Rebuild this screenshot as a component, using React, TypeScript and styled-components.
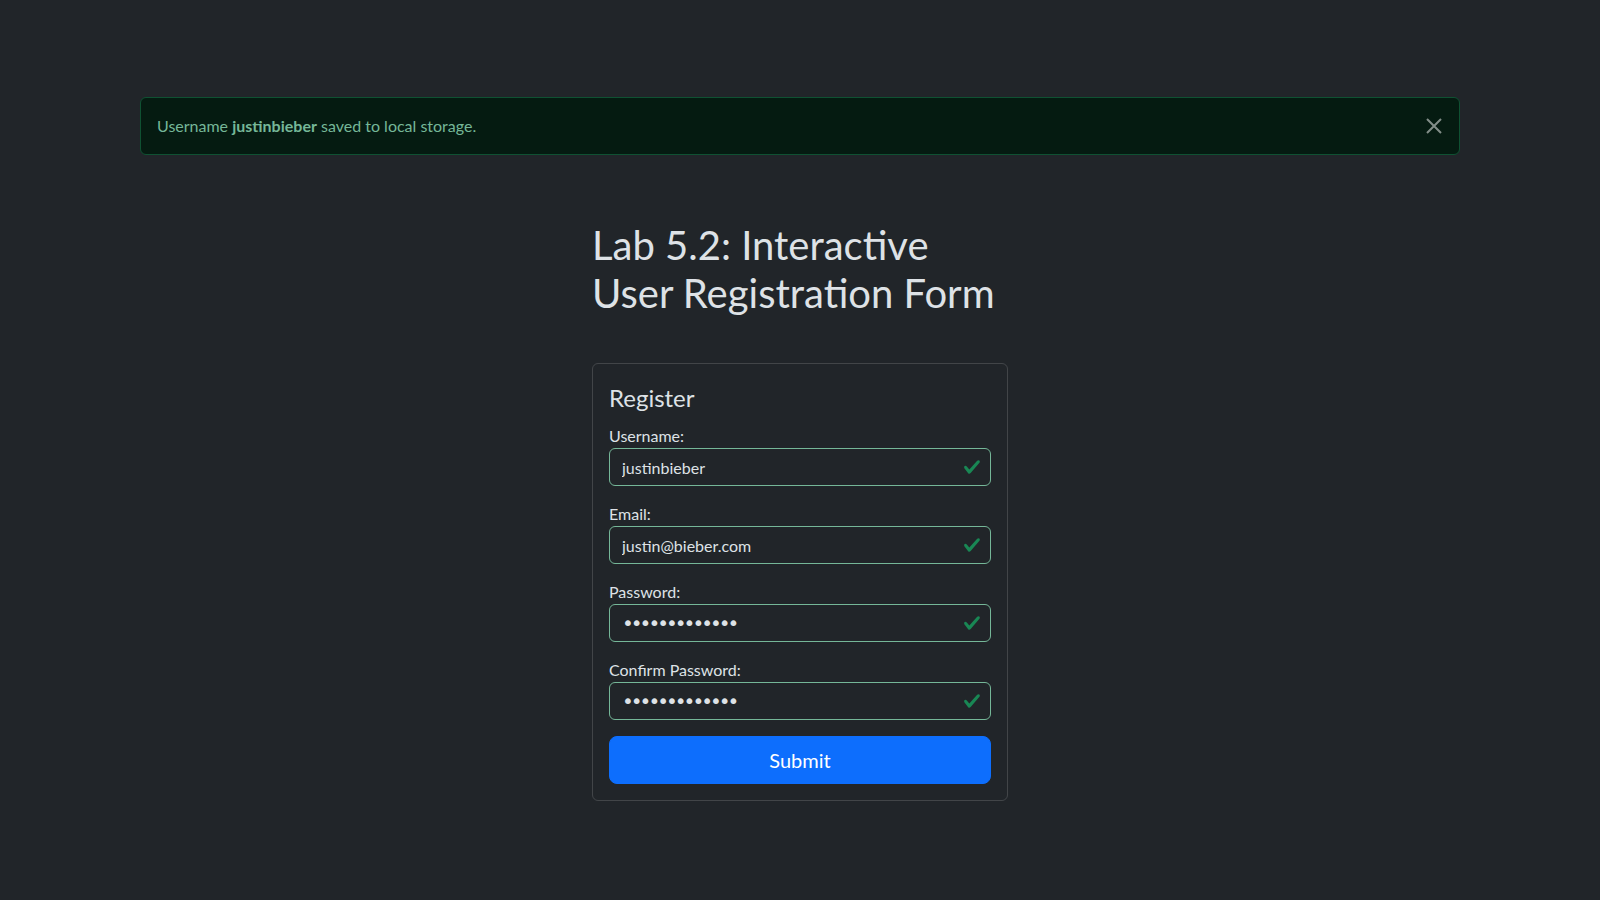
import React from "react";
import styled, { createGlobalStyle } from "styled-components";

const GlobalStyle = createGlobalStyle`
  * { box-sizing: border-box; }
  html, body {
    margin: 0;
    padding: 0;
    background: #212529;
    color: #dee2e6;
    font-family: Lato, "Noto Sans", sans-serif;
    font-size: 16px;
    line-height: 24px;
  }
`;

const Page = styled.div`
  width: 1320px;
  margin: 0 auto;
  padding-top: 97px;
`;

const Alert = styled.div`
  position: relative;
  padding: 16px 48px 16px 16px;
  border: 1px solid #0f5132;
  border-radius: 6px;
  background: #051b11;
  color: #75b798;
  font-size: 16px;
  line-height: 24px;
`;

const AlertStrong = styled.strong`
  font-weight: 700;
`;

const CloseButton = styled.button`
  position: absolute;
  top: 50%;
  right: 17px;
  width: 16px;
  height: 16px;
  margin-top: -8px;
  padding: 0;
  border: 0;
  background: transparent;
  display: flex;
  align-items: center;
  justify-content: center;
  cursor: pointer;
  opacity: 0.5;
`;

const Column = styled.main`
  width: 416px;
  margin-left: 452px;
  margin-top: 64px;
`;

const Heading = styled.h1`
  margin: 0;
  padding-top: 2px;
  font-size: 40px;
  line-height: 48px;
  font-weight: 400;
  color: #dee2e6;
`;

const Card = styled.form`
  margin-top: 46px;
  border: 1px solid rgba(255, 255, 255, 0.15);
  border-radius: 6px;
  padding: 16px;
  display: flex;
  flex-direction: column;
`;

const CardTitle = styled.h4`
  margin: 0 0 8px;
  font-size: 24px;
  line-height: 36px;
  font-weight: 400;
`;

const Field = styled.div`
  margin-bottom: 16px;
`;

const Label = styled.label`
  display: block;
  font-size: 16px;
  line-height: 24px;
`;

const InputWrap = styled.div`
  position: relative;
`;

const Input = styled.input<{ $secret?: boolean }>`
  display: block;
  width: 100%;
  height: 38px;
  padding: 6px 36px 6px 12px;
  border: 1px solid #75b798;
  border-radius: 6px;
  background: #212529;
  color: #dee2e6;
  font-family: ${(p) => (p.$secret ? '"DejaVu Sans", sans-serif' : "inherit")};
  font-size: ${(p) => (p.$secret ? "20px" : "16px")};
  letter-spacing: ${(p) => (p.$secret ? "-3px" : "normal")};
  line-height: 24px;
  outline: none;
`;

const CheckIcon = styled.svg`
  position: absolute;
  right: 10px;
  top: 50%;
  width: 18px;
  height: 18px;
  margin-top: -9px;
  pointer-events: none;
`;

const SubmitButton = styled.button`
  width: 100%;
  height: 48px;
  padding: 8px 16px;
  border: 1px solid #0d6efd;
  border-radius: 8px;
  background: #0d6efd;
  color: #fff;
  font-family: inherit;
  font-size: 20px;
  line-height: 30px;
  cursor: pointer;
`;

const Check = () => (
  <CheckIcon viewBox="0 0 8 8" aria-hidden="true">
    <path
      fill="#198754"
      d="M2.3 6.73.6 4.53c-.4-1.04.46-1.4 1.1-.8l1.1 1.4 3.4-3.8c.6-.63 1.6-.27 1.2.7l-4 4.6c-.43.5-.8.4-1.1.1z"
    />
  </CheckIcon>
);

type FieldProps = { id: string; label: string; type: string; value: string };

const FormField = ({ id, label, type, value }: FieldProps) => (
  <Field>
    <Label htmlFor={id}>{label}</Label>
    <InputWrap>
      <Input id={id} type={type} defaultValue={value} $secret={type === "password"} />
      <Check />
    </InputWrap>
  </Field>
);

export default function App() {
  return (
    <>
      <GlobalStyle />
      <Page>
        <Alert role="alert">
          Username <AlertStrong>justinbieber</AlertStrong> saved to local storage.
          <CloseButton type="button" aria-label="Close">
            <svg width="16" height="16" viewBox="0 0 16 16">
              <path d="M1 1L15 15M15 1L1 15" stroke="#ffffff" strokeWidth="2" />
            </svg>
          </CloseButton>
        </Alert>
        <Column>
          <Heading>Lab 5.2: Interactive User Registration Form</Heading>
          <Card onSubmit={(e) => e.preventDefault()}>
            <CardTitle>Register</CardTitle>
            <FormField id="username" label="Username:" type="text" value="justinbieber" />
            <FormField id="email" label="Email:" type="email" value="justin@bieber.com" />
            <FormField id="password" label="Password:" type="password" value="justinbieber1" />
            <FormField id="confirm" label="Confirm Password:" type="password" value="justinbieber1" />
            <SubmitButton type="submit">Submit</SubmitButton>
          </Card>
        </Column>
      </Page>
    </>
  );
}
